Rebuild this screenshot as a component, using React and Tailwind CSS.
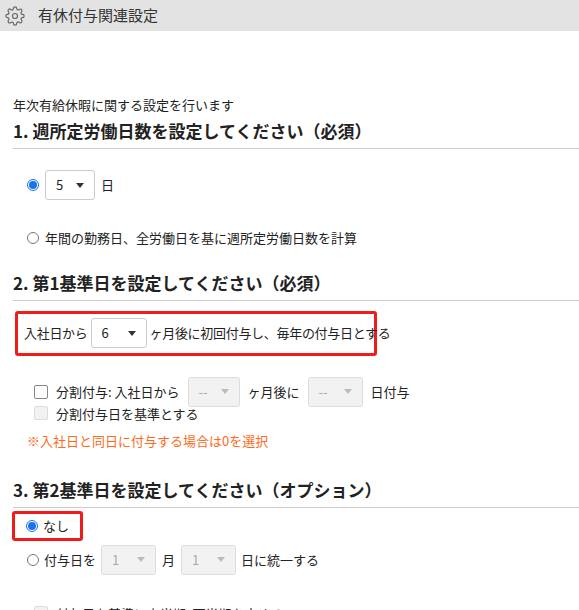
const F = { fontFamily: '"Noto Sans CJK JP", "Noto Sans", sans-serif' };

function Sel({ v, w = 'w-[50px]', disabled }) {
  return (
    <div className={`${w} shrink-0 h-[30px] flex items-center justify-between px-2.5 rounded-[3px] border ${disabled ? 'bg-[#f2f2f2] border-[#ddd] text-[#aaa]' : 'bg-white border-[#ccc] text-[#222]'}`}>
      <span className="text-[13px]">{v}</span>
      <span className={`w-0 h-0 border-l-[4px] border-r-[4px] border-t-[5px] border-l-transparent border-r-transparent ${disabled ? 'border-t-[#bbb]' : 'border-t-[#333]'}`} />
    </div>
  );
}
const Radio = ({ on }) => on ? (
  <span className="shrink-0 w-[12px] h-[12px] rounded-full border border-[#1a73e8] flex items-center justify-center"><span className="w-[8px] h-[8px] rounded-full bg-[#1a73e8]" /></span>
) : <span className="shrink-0 w-[12px] h-[12px] rounded-full border border-[#777] bg-white" />;
const Box = ({ dis }) => <span className={`shrink-0 w-[14px] h-[14px] rounded-[2px] border ${dis ? 'border-[#ddd] bg-[#f2f2f2]' : 'border-[#888] bg-white'}`} />;

export default function App() {
  return (
    <div style={F} className="w-[579px] h-[610px] overflow-hidden bg-white text-[#222] text-[13px] whitespace-nowrap">
      <div className="h-[31px] bg-[#e3e3e3] flex items-center pl-[5px] gap-[13px]">
        <svg width="20" height="20" viewBox="0 0 24 24" fill="none" stroke="#666" strokeWidth="1.4"><circle cx="12" cy="12" r="3"/><path d="M19.4 15a1.65 1.65 0 0 0 .33 1.820l.06.06a2 2 0 1 1-2.83 2.83l-.06-.06a1.650 1.65 0 0 0-1.82-.33 1.65 1.65 0 0 0-1 1.51V21a2 2 0 1 1-4 0v-.09A1.65 1.65 0 0 0 9 19.4a1.65 1.65 0 0 0-1.82.33l-.06.06a2 2 0 1 1-2.83-2.83l.06-.06A1.65 1.65 0 0 0 4.68 15a1.65 1.65 0 0 0-1.51-1H3a2 2 0 1 1 0-4h.09A1.65 1.65 0 0 0 4.6 9a1.65 1.65 0 0 0-.33-1.82l-.06-.06a2 2 0 1 1 2.83-2.83l.06.06A1.65 1.65 0 0 0 9 4.68a1.65 1.65 0 0 0 1-1.51V3a2 2 0 1 1 4 0v.09a1.65 1.65 0 0 0 1 1.51 1.65 1.65 0 0 0 1.82-.33l.06-.06a2 2 0 1 1 2.83 2.83l-.06.06A1.65 1.65 0 0 0 19.4 9a1.65 1.65 0 0 0 1.51 1H21a2 2 0 1 1 0 4h-.09a1.65 1.65 0 0 0-1.510 1z"/></svg>
        <span className="text-[15px] text-[#333]">有休付与関連設定</span>
      </div>
      <div className="pl-[13px]">
        <div className="mt-[64px] leading-[20px]">年次有給休暇に関する設定を行います</div>
        <div className="mt-[3px] text-[17px] font-bold leading-[26px] pb-[4px] border-b border-[#ccc]">1. 週所定労働日数を設定してください（必須）</div>
        <div className="mt-[21px] pl-[14px] flex items-center gap-[6px]"><Radio on /><Sel v="5" /><span>日</span></div>
        <div className="mt-[28px] pl-[14px] flex items-center gap-[6px]"><Radio /><span>年間の勤務日、全労働日を基に週所定労働日数を計算</span></div>
        <div className="mt-[22px] text-[17px] font-bold leading-[26px] pb-[4px] border-b border-[#ccc]">2. 第1基準日を設定してください（必須）</div>
        <div className="mt-[10px] ml-[2px] w-[362px] h-[45px] border-[3px] border-[#f01c1c] rounded-[3px] flex items-center pl-[6px] gap-[3px] tracking-[-0.3px]">
          <span>入社日から</span><Sel v="6" w="w-[56px]" /><span>ヶ月後に初回付与し、毎年の付与日とする</span>
        </div>
        <div className="mt-[21px] pl-[21px] flex items-center gap-[8px]"><Box /><span>分割付与: 入社日から</span><Sel v="--" w="w-[52px]" disabled /><span>ヶ月後に</span><Sel v="--" w="w-[55px]" disabled /><span>日付与</span></div>
        <div className="pl-[21px] flex items-center gap-[8px] -mt-[3px]"><Box dis /><span>分割付与日を基準とする</span></div>
        <div className="mt-[8px] pl-[14px] text-[#ff6a1a]">※入社日と同日に付与する場合は0を選択</div>
        <div className="mt-[26px] text-[17px] font-bold leading-[26px] pb-[4px] border-b border-[#ccc]">3. 第2基準日を設定してください（オプション）</div>
        <div className="mt-[3px] -ml-[1px] w-[71px] h-[30px] border-[3px] border-[#f01c1c] rounded-[3px] flex items-center pl-[11px] gap-[5px]"><Radio on /><span>なし</span></div>
        <div className="mt-[4px] pl-[14px] flex items-center gap-[5px]"><Radio /><span>付与日を</span><Sel v="1" w="w-[55px]" disabled /><span className="px-[1px]">月</span><Sel v="1" w="w-[55px]" disabled /><span>日に統一する</span></div>
        <div className="mt-[29px] pl-[21px] flex items-center gap-[8px]"><Box dis /><span>付与日を基準に上半期･下半期を定める</span></div>
      </div>
    </div>
  );
}
